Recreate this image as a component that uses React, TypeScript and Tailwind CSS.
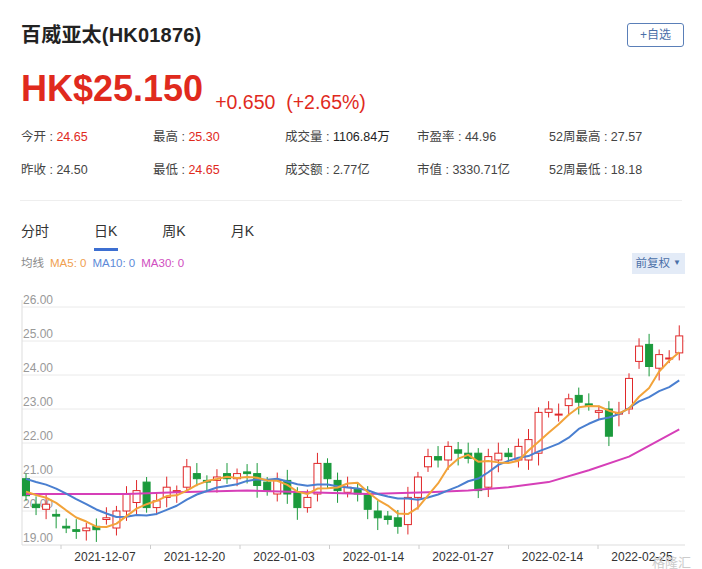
import React from "react";

const closes = [20.45,20.1,20.2,19.85,19.5,19.4,19.5,19.45,19.8,20.0,20.5,20.6,20.1,20.3,20.7,20.6,21.3,20.95,20.85,21.0,20.95,21.1,21.1,20.75,20.6,20.9,20.5,20.1,20.4,21.4,20.95,20.6,20.7,20.5,20.05,19.8,19.75,19.55,20.4,21.0,21.6,21.5,21.9,21.7,21.55,20.6,21.6,21.7,21.6,21.9,22.1,22.9,23.0,22.85,23.3,23.2,23.1,22.95,22.2,22.9,23.9,24.85,24.25,24.6,24.5,25.15];
const opens = [20.95,20.2,20.05,19.9,19.55,19.45,19.42,19.55,19.75,19.5,20.0,20.25,20.85,20.1,20.4,20.6,20.7,21.1,20.9,20.9,21.1,20.95,21.15,21.1,20.85,20.5,20.9,20.55,20.1,20.5,21.4,20.9,20.55,20.65,20.5,20.0,19.85,19.8,19.6,20.4,21.3,21.6,21.5,21.8,21.7,21.7,20.7,21.5,21.7,21.5,21.5,21.7,22.9,22.85,23.1,23.4,23.15,22.9,23.0,22.85,23.0,24.4,24.9,24.2,24.5,24.65];

const X0 = 26, DX = 10.05, W = 702;
const y = (v: number) => 545 - (v - 19) * 34;
const x = (i: number) => X0 + i * DX;

function ma(n: number, pre: number) {
  const arr = [...Array(n).fill(pre), ...closes];
  return closes.map((_, i) => {
    let s = 0;
    for (let k = 0; k < n; k++) s += arr[i + n - k];
    return s / n;
  });
}
const ma5 = ma(5, 20.6);
const ma10 = ma(10, 21.0);
const ma30pts: [number, number][] = [[0,20.5],[10,20.5],[15,20.55],[22,20.6],[28,20.55],[34,20.5],[40,20.55],[44,20.6],[48,20.7],[52,20.85],[56,21.2],[60,21.6],[65,22.4]];
function pts(vals: number[]) {
  return vals.map((v, i) => `${x(i)},${y(v)}`).join(" ");
}

export default function App() {
  const f = { fontFamily: '"Liberation Sans", "Noto Sans CJK SC", sans-serif' };
  const dates = ["2021-12-07","2021-12-20","2022-01-03","2022-01-14","2022-01-27","2022-02-14","2022-02-25"];
  return (
    <div className="w-[702px] h-[569px] bg-white relative overflow-hidden" style={f}>
      <div className="flex justify-between items-center px-[21px] pt-[20px]">
        <div className="text-[20px] font-bold text-[#222] tracking-[0.2px]">百威亚太(HK01876)</div>
        <div className="border border-[#5a7fb8] rounded-[3px] text-[12px] text-[#4a6fa8] px-[12px] py-[2px] mr-[-3px]">+自选</div>
      </div>
      <div className="flex items-end px-[21px] mt-[21px] gap-[12px]">
        <div className="text-[36px] font-bold text-[#e02a1d] leading-none">HK$25.150</div>
        <div className="text-[19.5px] text-[#e02a1d] leading-none mb-[-5px]">+0.650&nbsp; (+2.65%)</div>
      </div>
      <div className="grid grid-cols-5 px-[21px] mt-[21px] text-[12.5px] text-[#444] gap-y-[14px]">
        <div>今开 : <span className="text-[#e02a1d]">24.65</span></div>
        <div>最高 : <span className="text-[#e02a1d]">25.30</span></div>
        <div>成交量 : <span className="text-[#222]">1106.84万</span></div>
        <div>市盈率 : 44.96</div>
        <div>52周最高 : 27.57</div>
        <div>昨收 : 24.50</div>
        <div>最低 : <span className="text-[#e02a1d]">24.65</span></div>
        <div>成交额 : 2.77亿</div>
        <div>市值 : 3330.71亿</div>
        <div>52周最低 : 18.18</div>
      </div>
      <div className="mx-[20px] mt-[20px] border-t border-[#eee]" />
      <div className="flex px-[21px] mt-[20px] text-[14px] text-[#333] gap-[45px]">
        <div>分时</div>
        <div className="relative">日K<div className="absolute left-0 w-[24px] top-[27px] h-[3px] bg-[#3d6fd1]" /></div>
        <div>周K</div>
        <div>月K</div>
      </div>
      <div className="flex justify-between items-center px-[21px] mt-[11px] text-[11.5px]">
        <div className="flex gap-[6px]">
          <span className="text-[#888]">均线</span>
          <span className="text-[#f0a050]">MA5: 0</span>
          <span className="text-[#5d8ad8]">MA10: 0</span>
          <span className="text-[#d04ec0]">MA30: 0</span>
        </div>
        <div className="bg-[#e3ebf7] text-[#4a6fa8] px-[4px] py-[2px] mr-[-4px] flex items-center gap-[3px]">前复权<span className="text-[8px]">▼</span></div>
      </div>
      <svg className="absolute left-0 top-0" width={W} height={569}>
        {[26,25,24,23,22,21,20].map(v => (
          <g key={v}>
            <line x1={22} x2={685} y1={y(v)} y2={y(v)} stroke="#eaeaea" />
            <text x={23} y={y(v) - 3} fontSize="12" fill="#999" style={f}>{v.toFixed(2)}</text>
          </g>
        ))}
        <text x={23} y={542} fontSize="12" fill="#999" style={f}>19.00</text>
        <line x1={22} x2={22} y1={300} y2={545} stroke="#ddd" />
        <line x1={22} x2={685} y1={545} y2={545} stroke="#ddd" />
        {dates.map((d, i) => (
          <g key={d}>
            <line x1={61 + i * 89.5} x2={61 + i * 89.5} y1={545} y2={549} stroke="#ccc" />
            <text x={105 + i * 89.5} y={561} fontSize="12" fill="#333" textAnchor="middle" style={f}>{d}</text>
          </g>
        ))}
        {closes.map((c, i) => {
          const o = opens[i];
          const up = c >= o;
          const col = up ? "#e0282a" : "#1b9a3c";
          const hi = Math.max(o, c) + 0.15 + (i % 3) * 0.08;
          const lo = Math.min(o, c) - 0.15 - (i % 4) * 0.07;
          const top = y(Math.max(o, c));
          const h = Math.max(1, Math.abs(y(o) - y(c)));
          return (
            <g key={i}>
              <line x1={x(i)} x2={x(i)} y1={y(hi)} y2={y(lo)} stroke={col} />
              <rect x={x(i) - 3.5} y={top} width={7} height={h} fill={up ? "#fff" : col} stroke={col} />
            </g>
          );
        })}
        <polyline points={ma30pts.map(([i, v]) => `${x(i)},${y(v)}`).join(" ")} fill="none" stroke="#d63fb8" strokeWidth="2" strokeLinejoin="round" />
        <polyline points={pts(ma10)} fill="none" stroke="#4a7fd0" strokeWidth="2" strokeLinejoin="round" />
        <polyline points={pts(ma5)} fill="none" stroke="#f2a33a" strokeWidth="2" strokeLinejoin="round" />
        <text x={652} y={567} fontSize="13" fill="#ccc" style={f}>格隆汇</text>
      </svg>
    </div>
  );
}
